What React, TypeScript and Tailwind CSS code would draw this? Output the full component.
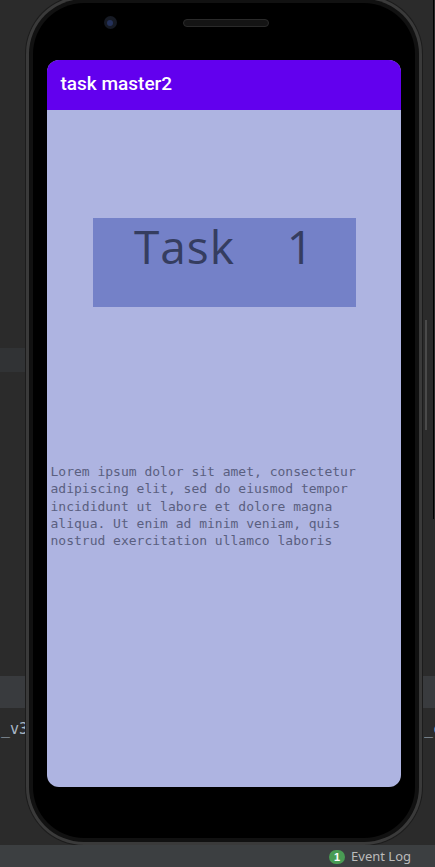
import React from "react";

const lorem =
  "Lorem ipsum dolor sit amet, consectetur adipiscing elit, sed do eiusmod tempor incididunt ut labore et dolore magna aliqua. Ut enim ad minim veniam, quis nostrud exercitation ullamco laboris";

function Phone(): JSX.Element {
  return (
    <div className="relative w-[396px] h-[849px] mt-[-4px] rounded-[58px] bg-[#3a3a3a] p-[3px] shadow-[0_0_0_1px_#1c1c1c]">
      <div className="w-full h-full rounded-[55px] bg-[#111] p-[4px]">
        <div className="w-full h-full rounded-[51px] bg-black flex flex-col items-center pt-[57px] px-[14px] pb-[51px]">
          {/* camera + speaker */}
          <div className="absolute top-[20px] left-[78px] w-[13px] h-[13px] rounded-full bg-[#161a24] flex items-center justify-center">
            <div className="w-[6px] h-[6px] rounded-full bg-[#24315a]" />
          </div>
          <div className="absolute top-[23px] left-[157px] w-[86px] h-[8px] rounded-full bg-[#141414] border border-[#2a2a2a]" />

          {/* screen */}
          <div className="w-[354px] h-full rounded-[12px] overflow-hidden bg-[#aeb4e1] flex flex-col">
            <div className="h-[50px] bg-[#6200ee] flex items-center px-[14px] shrink-0">
              <p className="text-white text-[19px] font-medium font-['Roboto',sans-serif] pb-[2px]">
                task master2
              </p>
            </div>
            <div className="flex-1 flex flex-col">
              <div className="pt-[108px] flex justify-center pl-[1px]">
                <div className="w-[263px] h-[89px] bg-[#7481c8] flex justify-center">
                  <p className="whitespace-pre text-[46px] leading-[56px] tracking-[1px] text-[#353d60] font-['Open_Sans',sans-serif]">
                    {"Task    1"}
                  </p>
                </div>
              </div>
              <p className="mt-[156px] pl-[4px] pr-[24px] text-[13px] leading-[17.3px] text-[#5a5f80] font-['DejaVu_Sans_Mono',monospace]">
                {lorem}
              </p>
            </div>
          </div>
        </div>
      </div>
    </div>
  );
}

function App(): JSX.Element {
  return (
    <div className="w-[435px] h-[867px] bg-[#2b2b2b] flex flex-col overflow-hidden font-['Liberation_Sans',sans-serif]">
      <div className="relative flex-1 flex justify-center pl-[13px] pr-[1px]">
        {/* ide background behind the emulator */}
        <div className="absolute left-0 top-[348px] w-[26px] h-[24px] bg-[#313335]" />
        <div className="absolute left-0 top-[676px] w-[26px] h-[32px] bg-[#393b3e]" />
        <div className="absolute right-0 top-[676px] w-[14px] h-[32px] bg-[#393b3e]" />
        <div className="absolute left-[1px] top-[718px] text-[15px] text-[#a9b7c6] font-['DejaVu_Sans_Mono',monospace]">
          _v3
        </div>
        <div className="absolute left-[424px] top-[718px] w-[11px] overflow-hidden text-[15px] text-[#a9b7c6] font-['DejaVu_Sans_Mono',monospace]">
          _c
        </div>
        <div className="absolute left-[433px] top-0 w-[1px] h-[519px] bg-black" />
        <div className="absolute left-[425px] top-[320px] w-[2px] h-[110px] bg-[#4a4a4a]" />
        <Phone />
      </div>
      <div className="h-[24px] bg-[#3c3f41] flex items-center justify-end pr-[24px] gap-[6px] shrink-0 relative z-10">
        <span className="w-[16px] h-[14px] rounded-full bg-[#499c54] text-white text-[11px] font-bold flex items-center justify-center">
          1
        </span>
        <span className="text-[13px] text-[#bbbbbb] font-['Noto_Sans',sans-serif]">Event Log</span>
      </div>
    </div>
  );
}

export default App;
